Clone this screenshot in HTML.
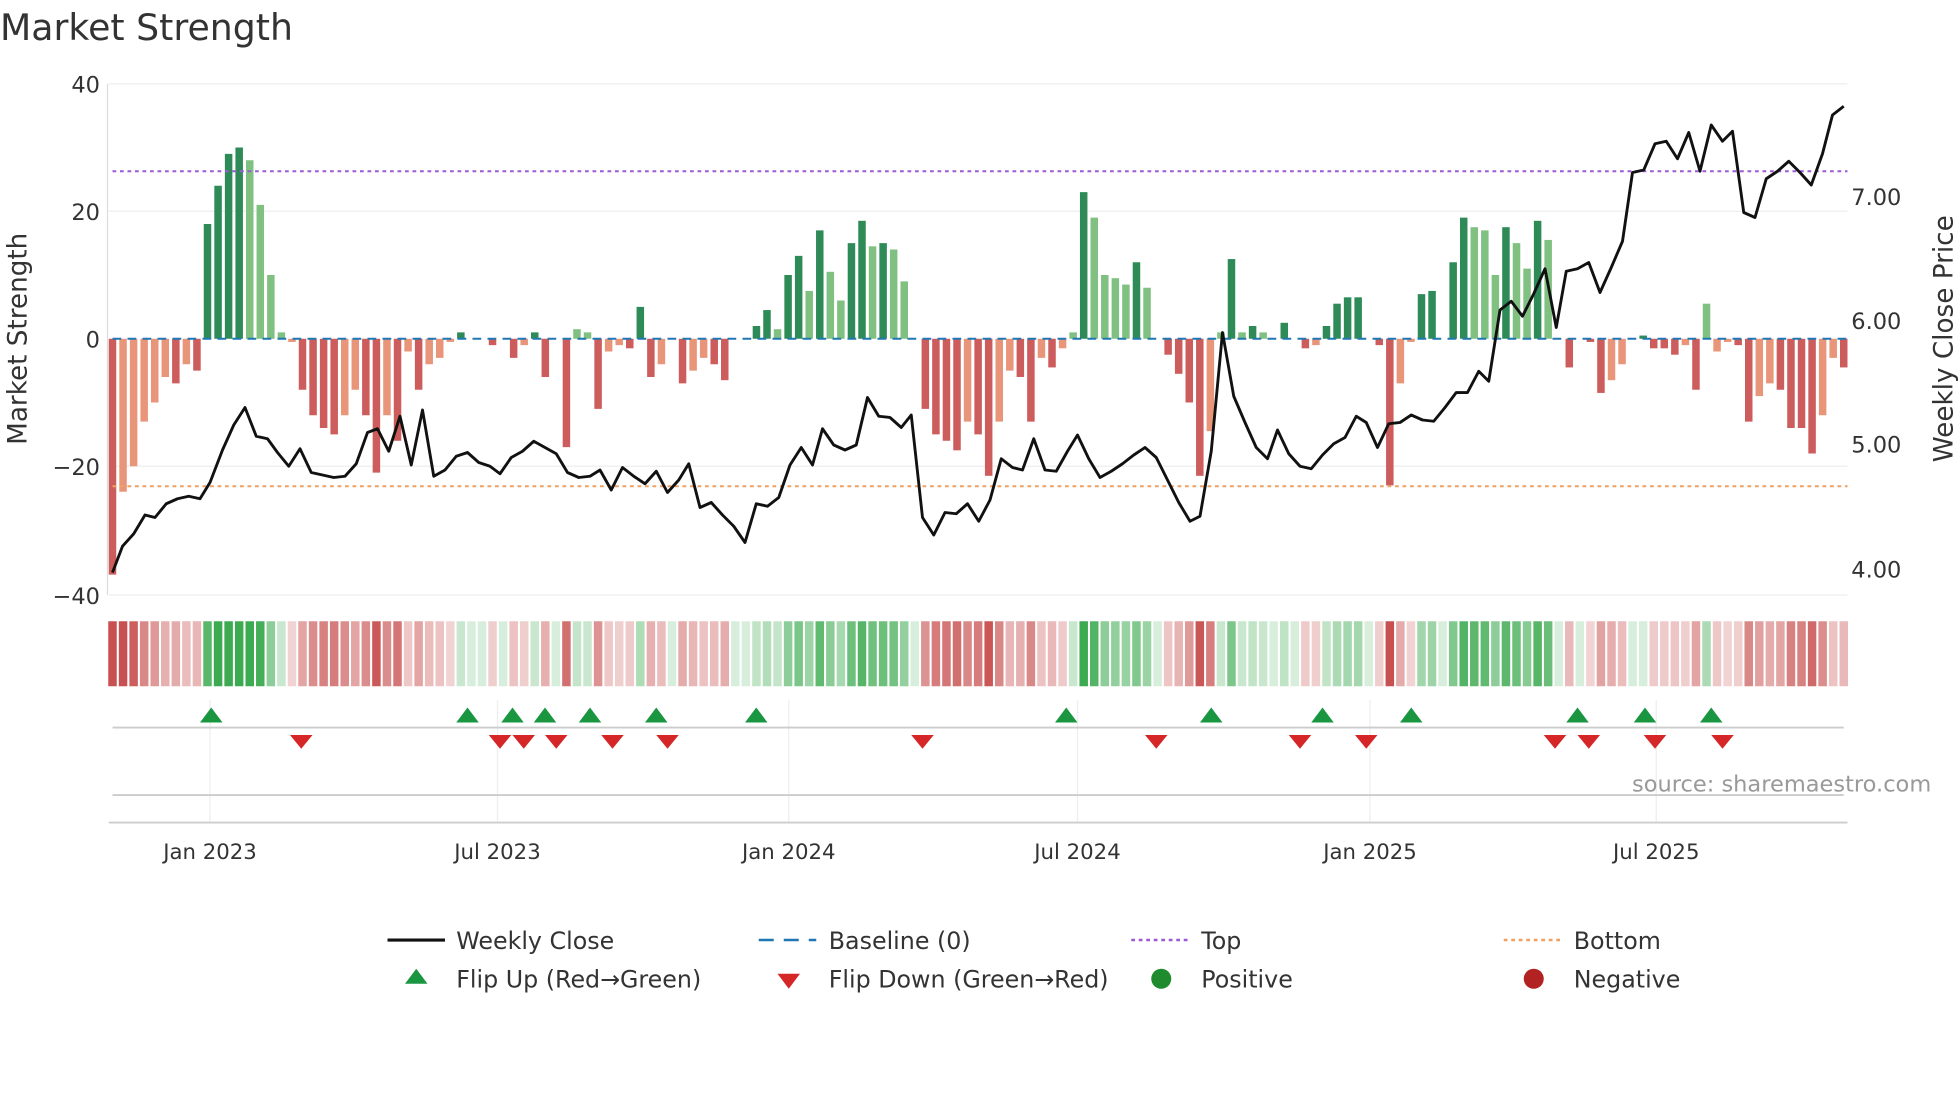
<!DOCTYPE html>
<html><head><meta charset="utf-8">
<style>
html,body{margin:0;padding:0;background:#fff;}
svg{display:block;font-family:"DejaVu Sans","Liberation Sans",sans-serif;}
</style></head>
<body>
<svg id="s" width="1960" height="1102" viewBox="0 0 1568 881.6" xmlns="http://www.w3.org/2000/svg">
<rect width="1568" height="882" fill="#fff"/>
<text x="0" y="32" font-size="29" fill="#333">Market Strength</text>
<g stroke="#eee" stroke-width="1">
<line x1="87" y1="67" x2="1478" y2="67"/><line x1="87" y1="169" x2="1478" y2="169"/>
<line x1="87" y1="373" x2="1478" y2="373"/><line x1="87" y1="476" x2="1478" y2="476"/>
<line x1="168" y1="560" x2="168" y2="658"/><line x1="398" y1="560" x2="398" y2="658"/>
<line x1="631" y1="560" x2="631" y2="658"/><line x1="862" y1="560" x2="862" y2="658"/>
<line x1="1096" y1="560" x2="1096" y2="658"/><line x1="1325" y1="560" x2="1325" y2="658"/>
</g>
<line x1="86" y1="67" x2="86" y2="476" stroke="#ddd"/>
<g font-size="18" fill="#333" text-anchor="end">
<text x="80" y="74">40</text><text x="80" y="176">20</text><text x="80" y="278">0</text>
<text x="80" y="380">−20</text><text x="80" y="483">−40</text>
</g>
<g font-size="18" fill="#333">
<text x="1481" y="164">7.00</text><text x="1481" y="263">6.00</text>
<text x="1481" y="362">5.00</text><text x="1481" y="462">4.00</text>
</g>
<text transform="translate(21,271) rotate(-90)" font-size="21" fill="#333" text-anchor="middle">Market Strength</text>
<text transform="translate(1562,271) rotate(-90)" font-size="21" fill="#333" text-anchor="middle">Weekly Close Price</text>
<g id="bars"></g>
<g id="heat"></g>
<line x1="90" y1="271" x2="1478" y2="271" stroke="#1f77b4" stroke-width="1.6" stroke-dasharray="7,5"/>
<line x1="90" y1="137" x2="1478" y2="137" stroke="#9b59d6" stroke-width="1.6" stroke-dasharray="3,3"/>
<line x1="90" y1="389" x2="1478" y2="389" stroke="#f0a060" stroke-width="1.6" stroke-dasharray="3,3"/>
<polyline id="price" fill="none" stroke="#111" stroke-width="2.3" stroke-linejoin="round"/>
<line x1="90" y1="582" x2="1475" y2="582" stroke="#ccc" stroke-width="1.5"/>
<line x1="90" y1="636" x2="1475" y2="636" stroke="#ccc" stroke-width="1.5"/>
<line x1="87" y1="658" x2="1478" y2="658" stroke="#ccc" stroke-width="1.5"/>
<g id="marks"></g>
<text x="1545" y="633" font-size="18" fill="#999" text-anchor="end">source: sharemaestro.com</text>
<g font-size="17" fill="#333" text-anchor="middle">
<text x="168" y="687">Jan 2023</text><text x="398" y="687">Jul 2023</text>
<text x="631" y="687">Jan 2024</text><text x="862" y="687">Jul 2024</text>
<text x="1096" y="687">Jan 2025</text><text x="1325" y="687">Jul 2025</text>
</g>
<g font-size="19" fill="#333">
<line x1="310" y1="752" x2="356" y2="752" stroke="#111" stroke-width="2.5"/>
<text x="365" y="759">Weekly Close</text>
<line x1="607" y1="752" x2="653" y2="752" stroke="#1f77b4" stroke-width="2" stroke-dasharray="12,8"/>
<text x="663" y="759">Baseline (0)</text>
<line x1="905" y1="752" x2="951" y2="752" stroke="#9b59d6" stroke-width="2" stroke-dasharray="3,3"/>
<text x="961" y="759">Top</text>
<line x1="1203" y1="752" x2="1249" y2="752" stroke="#f0a060" stroke-width="2" stroke-dasharray="3,3"/>
<text x="1259" y="759">Bottom</text>
<polygon points="333,775 324,787 342,787" fill="#1a9641"/>
<text x="365" y="790">Flip Up (Red→Green)</text>
<polygon points="631,791 622,779 640,779" fill="#d62728"/>
<text x="663" y="790">Flip Down (Green→Red)</text>
<circle cx="929" cy="783" r="8" fill="#1e8c2e"/>
<text x="961" y="790">Positive</text>
<circle cx="1227" cy="783" r="8" fill="#b22222"/>
<text x="1259" y="790">Negative</text>
</g>
</svg>
<script>
var v=[-37,-24,-20,-13,-10,-6,-7,-4,-5,18,24,29,30,28,21,10,1,-0.5,-8,-12,-14,-15,-12,-8,-12,-21,-12,-16,-2,-8,-4,-3,-0.5,1,0,0,-1,0,-3,-1,1,-6,0,-17,1.5,1,-11,-2,-1,-1.5,5,-6,-4,0,-7,-5,-3,-4,-6.5,0,0,2,4.5,1.5,10,13,7.5,17,10.5,6,15,18.5,14.5,15,14,9,0,-11,-15,-16,-17.5,-13,-15,-21.5,-13,-5,-6,-13,-3,-4.5,-1.5,1,23,19,10,9.5,8.5,12,8,0,-2.5,-5.5,-10,-21.5,-14.5,1,12.5,1,2,1,0,2.5,0,-1.5,-1,2,5.5,6.5,6.5,0,-1,-23,-7,-0.5,7,7.5,0,12,19,17.5,17,10,17.5,15,11,18.5,15.5,0,-4.5,0,-0.5,-8.5,-6.5,-4,0,0.5,-1.5,-1.5,-2.5,-1,-8,5.5,-2,-0.5,-1,-13,-9,-7,-8,-14,-14,-18,-12,-3,-4.5];
var n=v.length,x0=90,x1=1475,st=(x1-x0)/(n-1),NS="http://www.w3.org/2000/svg";
var B=document.getElementById('bars'),H=document.getElementById('heat');
function r(g,a){var e=document.createElementNS(NS,'rect');for(var k in a)e.setAttribute(k,a[k]);g.appendChild(e);}
for(var i=0;i<n;i++){var x=x0+i*st,val=v[i],p=i?v[i-1]:0;var up=Math.abs(val)>=Math.abs(p);
var c=val>=0?(up?'#2e8b57':'#80c080'):(up?'#cd5c5c':'#e8957a');
var y=271-Math.max(val,0)*5.1,h=Math.abs(val)*5.1;if(h>0.3)r(B,{x:x-3,y:y,width:6,height:h,fill:c});
var a=Math.min(1,0.25+Math.abs(val)/30);var hc=val>=0?'rgba(60,170,80,'+a+')':'rgba(200,80,80,'+a+')';
if(Math.abs(val)<0.6)hc=val>=0?'rgba(60,170,80,0.2)':'rgba(200,80,80,0.25)';
r(H,{x:x-3.4,y:497,width:6.8,height:52,fill:hc});}
var P=[[90,458],[98,437],[107,427],[116,412],[124,414],[133,403],[142,399],[151,397],[160,399],[168,386],[178,360],[187,340],[196,326],[205,349],[214,351],[222,362],[231,373],[240,359],[249,378],[258,380],[267,382],[276,381],[285,371],[294,346],[302,343],[311,361],[320,333],[329,372],[338,328],[347,381],[356,376],[365,365],[374,362],[383,370],[392,373],[400,379],[409,366],[418,361],[427,353],[436,358],[445,363],[454,378],[463,382],[472,381],[480,376],[489,392],[498,374],[507,381],[516,387],[525,377],[534,394],[543,384],[551,371],[560,406],[569,402],[578,412],[587,421],[596,434],[605,403],[614,405],[623,398],[632,372],[641,358],[650,372],[658,343],[667,356],[676,360],[685,356],[694,318],[703,333],[712,334],[721,342],[729,332],[738,414],[747,428],[756,410],[765,411],[774,403],[783,417],[792,400],[801,367],[810,374],[818,376],[827,351],[836,376],[845,377],[854,361],[862,348],[871,367],[880,382],[889,377],[898,371],[907,364],[916,358],[925,366],[934,384],[943,402],[952,417],[960,413],[969,361],[978,266],[987,317],[996,338],[1005,358],[1014,367],[1022,344],[1031,363],[1040,373],[1049,375],[1058,364],[1067,355],[1076,350],[1085,333],[1093,338],[1102,358],[1111,339],[1120,338],[1129,332],[1138,336],[1147,337],[1156,326],[1165,314],[1174,314],[1183,297],[1191,305],[1200,248],[1209,241],[1218,253],[1227,235],[1236,215],[1245,262],[1253,217],[1262,215],[1271,210],[1280,234],[1289,214],[1298,193],[1306,138],[1315,136],[1324,115],[1333,113],[1342,127],[1351,106],[1360,137],[1369,100],[1378,113],[1386,105],[1395,170],[1404,174],[1413,143],[1422,137],[1431,129],[1440,138],[1449,148],[1458,123],[1466,92],[1475,85]];
document.getElementById('price').setAttribute('points',P.map(function(q){return q.join(',')}).join(' '));
var M=document.getElementById('marks'),s='';
[169,374,410,436,472,525,605,853,969,1058,1129,1262,1316,1369].forEach(function(x){s+='<polygon points="'+x+',566 '+(x-9)+',578 '+(x+9)+',578" fill="#1a9641"/>';});
[241,400,419,445,490,534,738,925,1040,1093,1244,1271,1324,1378].forEach(function(x){s+='<polygon points="'+x+',599 '+(x-9)+',588 '+(x+9)+',588" fill="#d62728"/>';});
M.innerHTML=s;
</script>
</body></html>
